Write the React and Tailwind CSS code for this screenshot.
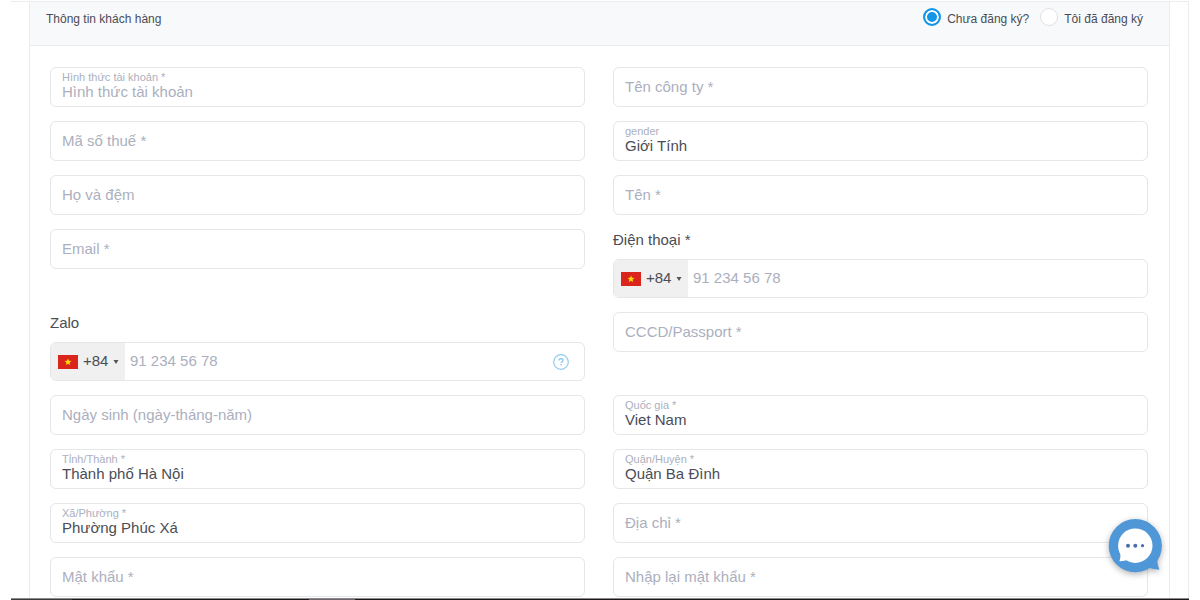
import { useState } from "react";

const boxClass =
  "w-full rounded-md border border-[#e5e6ea] bg-white focus-within:border-[#1296e8]";

function TextField({ id, label, type = "text" }) {
  return (
    <div className={`${boxClass} flex h-10 self-start`}>
      <input
        id={id}
        type={type}
        aria-label={label}
        placeholder={label}
        className="min-w-0 flex-1 rounded-md bg-transparent px-[11px] text-[15px] text-[#4a4d55] outline-none placeholder:text-[#abafbe]"
      />
    </div>
  );
}

function SelectField({ id, label, option, muted = false }) {
  return (
    <div className={`${boxClass} flex h-10 flex-col self-start pt-[3px]`}>
      <label htmlFor={id} className="px-[11px] text-[11px] leading-3 text-[#abafbe]">
        {label}
      </label>
      <select
        id={id}
        className={`h-[18px] w-full appearance-none bg-transparent px-[11px] text-[15px] leading-[18px] outline-none ${
          muted ? "text-[#abafbe]" : "text-[#4a4d55]"
        }`}
      >
        <option>{option}</option>
      </select>
    </div>
  );
}

function VietnamFlag() {
  return (
    <svg viewBox="0 0 20 14" className="h-3.5 w-5 shrink-0" aria-hidden="true">
      <rect width="20" height="14" fill="#da251d" />
      <path
        d="M10 3.4l.95 2.4 2.55.15-2 1.65.65 2.5L10 8.7l-2.15 1.4.65-2.5-2-1.65 2.55-.15z"
        fill="#ffde00"
      />
    </svg>
  );
}

function PhoneField({ id, label, help = false }) {
  return (
    <div className="flex flex-col">
      <label htmlFor={id} className="h-[30px] pt-px text-[15px] leading-5 text-[#4a4d55]">
        {label}
      </label>
      <div className={`${boxClass} flex h-[39px] items-stretch`}>
        <button
          type="button"
          aria-label="+84"
          className="flex w-[74px] shrink-0 items-center rounded-l-[5px] bg-[#f0f0f0] pl-[7px] text-[15px] text-[#4a4d55]"
        >
          <VietnamFlag />
          <span className="ml-[5px]">+84</span>
          <svg viewBox="0 0 6 4" className="ml-[5px] h-1 w-1.5" aria-hidden="true">
            <path d="M.5 0h5L3 4z" fill="#555" />
          </svg>
        </button>
        <input
          id={id}
          type="tel"
          placeholder="91 234 56 78"
          className="min-w-0 flex-1 rounded-r-md bg-transparent px-[5px] text-[15px] text-[#4a4d55] outline-none placeholder:text-[#abafbe]"
        />
        {help && (
          <button type="button" aria-label="Zalo" className="mr-[15px] shrink-0">
            <svg viewBox="0 0 16 16" className="size-4" fill="none" stroke="#8ecbf3" aria-hidden="true">
              <circle cx="8" cy="8" r="7.3" strokeWidth="1.2" />
              <path d="M6 6.6c0-1.2.8-1.9 2-1.9s2 .7 2 1.7c0 1.3-1.9 1.4-1.9 2.7" strokeWidth="1.5" />
              <path d="M8.1 10v1.6" strokeWidth="1.5" />
            </svg>
          </button>
        )}
      </div>
    </div>
  );
}

function RadioOption({ id, label, checked, onChange }) {
  return (
    <div className="flex items-start">
      <input
        id={id}
        type="radio"
        name="registration"
        checked={checked}
        onChange={onChange}
        className="size-[18px] appearance-none rounded-full border border-[#dfe1e6] bg-white checked:border-2 checked:border-[#1296e8] checked:bg-[#1296e8] checked:shadow-[inset_0_0_0_2px_#fff]"
      />
      <label htmlFor={id} className="pl-1.5 pt-[3px] text-xs leading-4 text-[#4a4d55]">
        {label}
      </label>
    </div>
  );
}

export default function App() {
  const [mode, setMode] = useState("new");

  return (
    <div className="bg-white px-[11px] pt-px font-['Liberation_Sans',Arial,sans-serif]">
      <main className="border-r border-t border-[#ececf0] px-[18px]">
        <form className="border-x border-[#ececf0]">
          <header className="flex h-11 items-start justify-between border-b border-[#e9ebef] bg-[#f8f9fb] pl-4 pr-[26px]">
            <h1 className="pt-[9px] text-xs leading-4 text-[#4a4d55]">Thông tin khách hàng</h1>
            <div className="flex gap-[11px] pt-1.5">
              <RadioOption
                id="mode-new"
                label="Chưa đăng ký?"
                checked={mode === "new"}
                onChange={() => setMode("new")}
              />
              <RadioOption
                id="mode-existing"
                label="Tôi đã đăng ký"
                checked={mode === "existing"}
                onChange={() => setMode("existing")}
              />
            </div>
          </header>

          <div className="grid grid-cols-2 gap-x-7 gap-y-3.5 pb-px pl-5 pr-[21px] pt-[21px]">
            <SelectField id="account-type" label="Hình thức tài khoản *" option="Hình thức tài khoản" muted />
            <TextField id="company" label="Tên công ty *" />
            <TextField id="tax-code" label="Mã số thuế *" />
            <SelectField id="gender" label="gender" option="Giới Tính" />
            <TextField id="last-name" label="Họ và đệm" />
            <TextField id="first-name" label="Tên *" />
            <TextField id="email" label="Email *" type="email" />
            <PhoneField id="phone" label="Điện thoại *" />
            <PhoneField id="zalo" label="Zalo" help />
            <TextField id="identity" label="CCCD/Passport *" />
            <TextField id="birthday" label="Ngày sinh (ngày-tháng-năm)" />
            <SelectField id="country" label="Quốc gia *" option="Viet Nam" />
            <SelectField id="province" label="Tỉnh/Thành *" option="Thành phố Hà Nội" />
            <SelectField id="district" label="Quận/Huyện *" option="Quận Ba Đình" />
            <SelectField id="ward" label="Xã/Phường *" option="Phường Phúc Xá" />
            <TextField id="address" label="Địa chỉ *" />
            <TextField id="password" label="Mật khẩu *" type="password" />
            <TextField id="password-repeat" label="Nhập lại mật khẩu *" type="password" />
          </div>
        </form>
      </main>

      <div className="flex h-0.5 border-t border-[#8b8888] bg-[#1d181a]">
        <div className="w-[61px] bg-[#3c3a3b]" />
        <div className="w-[237px]" />
        <div className="w-[46px] bg-[#6d6670]" />
      </div>

      <button
        type="button"
        aria-label="Chat"
        className="fixed bottom-[25px] right-9 size-14 drop-shadow-[0_2px_3px_rgba(0,0,0,0.3)]"
      >
        <svg viewBox="0 0 56 56" className="size-14" aria-hidden="true">
          <circle cx="27.3" cy="26.7" r="26.6" fill="#4f97d7" />
          <path d="M49.5 36c-.6 5.5 0 10.3 2 14.4-4.4.2-8.5-.5-12.5-2.4z" fill="#4f97d7" />
          <circle cx="27.3" cy="26.7" r="17.2" fill="#fff" />
          <path d="M12 33c.8 3.3.5 6.3-.6 9.2 3.2.1 6-.5 8.6-1.7z" fill="#fff" />
          <circle cx="20" cy="26.7" r="2" fill="#4a6fa8" />
          <circle cx="27.3" cy="26.7" r="2" fill="#4a6fa8" />
          <circle cx="34.5" cy="26.7" r="1.6" fill="#4a6fa8" />
        </svg>
      </button>
    </div>
  );
}
